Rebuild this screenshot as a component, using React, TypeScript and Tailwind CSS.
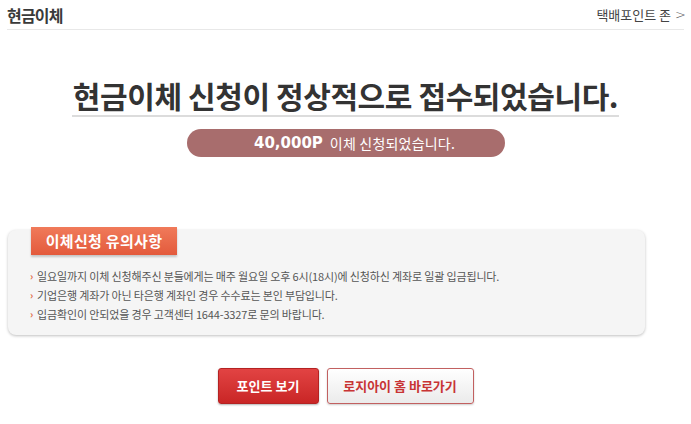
export default function App() {
  const notes = [
    "일요일까지 이체 신청해주신 분들에게는 매주 월요일 오후 6시(18시)에 신청하신 계좌로 일괄 입금됩니다.",
    "기업은행 계좌가 아닌 타은행 계좌인 경우 수수료는 본인 부담입니다.",
    "입금확인이 안되었을 경우 고객센터 1644-3327로 문의 바랍니다.",
  ];

  return (
    <div className="w-[691px] h-[424px] bg-white overflow-hidden font-['Noto_Sans_CJK_KR',sans-serif] text-[#333]">
      <div className="mx-[7px] h-[30px] flex justify-between items-center border-b border-[#e8e8e8]">
        <h2 className="text-[16px] font-bold tracking-[-0.8px] text-[#3a3a3a]">현금이체</h2>
        <a className="text-[13px] text-[#444] flex items-center gap-[4px] mr-[-2px]">
          택배포인트 존
          <span className="text-[13px] leading-none font-['DejaVu_Sans',sans-serif] font-light text-[#555]">&gt;</span>
        </a>
      </div>

      <div className="flex flex-col items-center mt-[46px]">
        <h1 className="text-[30px] leading-[38px] font-bold text-[#333] tracking-[-0.4px] border-b-2 border-[#dcdcdc] pb-[1px] px-[1px]">
          현금이체 신청이 정상적으로 접수되었습니다.
        </h1>
        <div className="mt-[12px] w-[318px] h-[28px] rounded-full bg-[#a86d6d] flex items-center justify-center pl-[18px] text-white text-[14px]">
          <b className="font-bold mr-[7px] font-['DejaVu_Sans',sans-serif] text-[15px]">40,000P</b>
          <span className="tracking-[0.2px]">이체 신청되었습니다.</span>
        </div>
      </div>

      <div className="ml-[8px] mt-[73px] w-[637px] h-[105px] rounded-[8px] bg-[#f5f5f5] shadow-[0_1px_3px_rgba(0,0,0,0.25)] relative pt-[38px] pl-[22px]">
        <div className="absolute left-[23px] top-[-3px] w-[146px] h-[28px] bg-gradient-to-b from-[#f07a5a] to-[#e35a3c] shadow-[0_2px_2px_rgba(0,0,0,0.2)] flex items-center justify-center text-white text-[15px] font-bold tracking-[0.3px]">
          이체신청 유의사항
        </div>
        <ul className="flex flex-col gap-[3px]">
          {notes.map((n, i) => (
            <li key={i} className="flex items-center text-[11px] leading-[16px] text-[#555] tracking-[-0.15px]">
              <span className="text-[#e0683e] text-[10px] font-bold mr-[4px]">›</span>
              {n}
            </li>
          ))}
        </ul>
      </div>

      <div className="flex justify-center gap-[8px] mt-[33px]">
        <button className="w-[101px] h-[36px] rounded-[3px] border border-[#b42222] bg-gradient-to-b from-[#e24343] to-[#c92525] text-white text-[13px] font-bold shadow-[0_1px_2px_rgba(0,0,0,0.3)]">
          포인트 보기
        </button>
        <button className="w-[147px] h-[36px] rounded-[3px] border border-[#c26060] bg-gradient-to-b from-white to-[#ebebeb] text-[#c83434] text-[13px] font-bold shadow-[0_1px_2px_rgba(0,0,0,0.2)]">
          로지아이 홈 바로가기
        </button>
      </div>
    </div>
  );
}
